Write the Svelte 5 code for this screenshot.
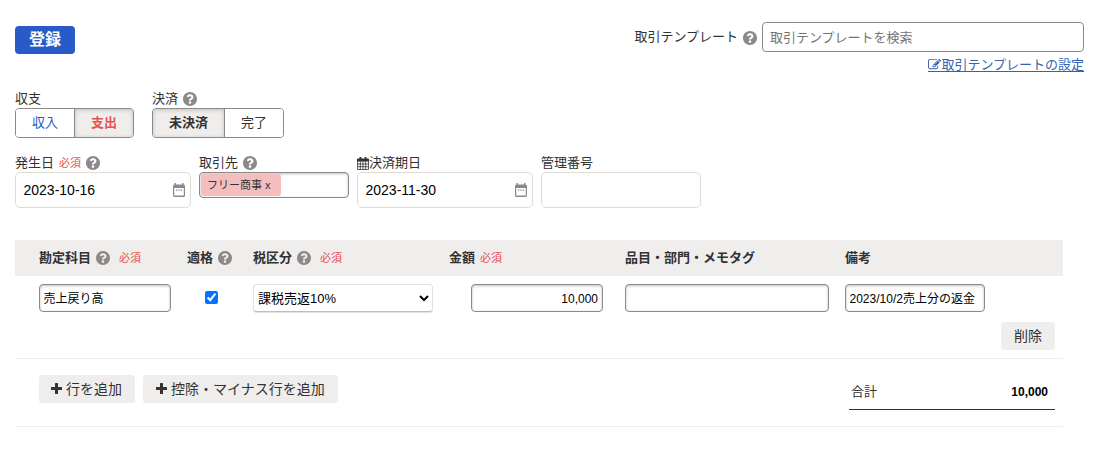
<script>
  let template = $state('');
  let dealDate = $state('2023-10-16');
  let dueDate = $state('2023-11-30');
  let number = $state('');
  let account = $state('売上戻り高');
  let qualified = $state(true);
  let amount = $state('10,000');
  let tags = $state('');
  let note = $state('2023/10/2売上分の返金');
</script>

{#snippet help()}
  <svg class="help" viewBox="8 8 496 496" aria-hidden="true">
    <path d="M504 256c0 136.997-111.043 248-248 248S8 392.997 8 256C8 119.083 119.043 8 256 8s248 111.083 248 248zM262.655 90c-54.497 0-89.255 22.957-116.549 63.758-3.536 5.286-2.353 12.415 2.715 16.258l34.699 26.31c5.205 3.947 12.621 3.008 16.665-2.122 17.864-22.658 30.113-35.797 57.303-35.797 20.429 0 45.698 13.148 45.698 32.958 0 14.976-12.363 22.667-32.534 33.976C247.128 238.528 216 254.941 216 296v4c0 6.627 5.373 12 12 12h56c6.627 0 12-5.373 12-12v-1.333c0-28.462 83.186-29.647 83.186-106.667 0-58.002-60.165-102-116.531-102zM256 338c-25.365 0-46 20.635-46 46 0 25.364 20.635 46 46 46s46-20.636 46-46c0-25.364-20.635-46-46-46z" />
  </svg>
{/snippet}

{#snippet plus()}
  <svg class="plus" viewBox="0 0 11 11" aria-hidden="true"><path d="M4 .5Q4 0 4.500 0h2Q7 0 7 .5V4h3.500Q11 4 11 4.500v2Q11 7 10.500 7H7v3.500Q7 11 6.500 11h-2Q4 11 4 10.500V7H.5Q0 7 0 6.500v-2Q0 4 .5 4H4z" /></svg>
{/snippet}

{#snippet picker()}
  <svg class="picker" viewBox="0 0 12 14" aria-hidden="true">
    <path fill-rule="evenodd" d="M1.500 0h1.500v1.500h6V0h1.500v1.500Q12 1.500 12 3v9.500Q12 14 10.500 14h-9Q0 14 0 12.500V3Q0 1.500 1.500 1.500zM1.200 5v7.600h9.600V5z" />
    <path d="M3 6.500h1.300v1.300H3zM5.400 6.500h1.300v1.300H5.400zM7.800 6.500h1.300v1.300H7.800z" />
  </svg>
{/snippet}

<main>
  <header>
    <button class="submit">登録</button>
    <div class="template">
      <div class="search">
        <span>取引テンプレート</span>{@render help()}
        <input bind:value={template} placeholder="取引テンプレートを検索" />
      </div>
      <a href="#settings"><svg viewBox="0 0 1792 1792" aria-hidden="true"><path d="M888 1184l116-116-152-152-116 116v56h96v96h56zm440-720q-16-16-33 1l-350 350q-17 17-1 33t33-1l350-350q17-17 1-33zm80 594v190q0 119-84.500 203.500t-203.500 84.500h-832q-119 0-203.500-84.500t-84.500-203.500v-832q0-119 84.500-203.500t203.500-84.500h832q63 0 117 25 15 7 18 23 3 17-9 29l-49 49q-14 14-32 8-23-6-45-6h-832q-66 0-113 47t-47 113v832q0 66 47 113t113 47h832q66 0 113-47t47-113v-126q0-13 9-22l64-64q15-15 35-7t20 29zm-96-738l288 288-672 672h-288v-288zm444 132l-92 92-288-288 92-92q28-28 68-28t68 28l152 152q28 28 28 68t-28 68z" /></svg>取引テンプレートの設定</a>
    </div>
  </header>

  <section class="toggles">
    <div class="field">
      <div class="label">収支</div>
      <div class="segment income">
        <button class="blue">収入</button><button class="on red">支出</button>
      </div>
    </div>
    <div class="field">
      <div class="label">決済{@render help()}</div>
      <div class="segment settle">
        <button class="on">未決済</button><button>完了</button>
      </div>
    </div>
  </section>

  <section class="details">
    <div class="field date">
      <div class="label">発生日<span class="required">必須</span>{@render help()}</div>
      <div class="soft"><input bind:value={dealDate} />{@render picker()}</div>
    </div>
    <div class="field partner">
      <div class="label">取引先{@render help()}</div>
      <div class="box tagbox"><span class="tag">フリー商事 <span>x</span></span></div>
    </div>
    <div class="field date">
      <div class="label due"><svg class="cal" viewBox="0 0 12 13" aria-hidden="true"><path class="bar" d="M0 2Q0 1.500 1 1.500h10q1 0 1 .5v2.500H0zM2.500 0h1.800v3H2.500zM7.700 0h1.800v3H7.700z" /><path d="M.5 4v8.500h11V4M.5 7h11M.5 9.700h11M3.300 4v8.500M6 4v8.500M8.700 4v8.500" /></svg>決済期日</div>
      <div class="soft"><input bind:value={dueDate} />{@render picker()}</div>
    </div>
    <div class="field number">
      <div class="label">管理番号</div>
      <div class="soft"><input bind:value={number} /></div>
    </div>
  </section>

  <section class="lines">
    <div class="grid head">
      <div>勘定科目{@render help()}<span class="required wide">必須</span></div>
      <div>適格{@render help()}</div>
      <div>税区分{@render help()}<span class="required wide">必須</span></div>
      <div>金額<span class="required">必須</span></div>
      <div>品目・部門・メモタグ</div>
      <div>備考</div>
    </div>
    <div class="grid row">
      <input class="box account" bind:value={account} />
      <div class="check"><input type="checkbox" bind:checked={qualified} /></div>
      <select><option>課税売返10%</option></select>
      <input class="box amount" bind:value={amount} />
      <input class="box tags" bind:value={tags} />
      <input class="box note" bind:value={note} />
    </div>
    <div class="remove"><button class="gray">削除</button></div>
    <div class="foot">
      <div class="adders">
        <button class="gray">{@render plus()}行を追加</button>
        <button class="gray long">{@render plus()}控除・マイナス行を追加</button>
      </div>
      <div class="total"><span>合計</span><strong>10,000</strong></div>
    </div>
  </section>
</main>

<style>
  :global(body) { background: #fff; }
  main, main * { box-sizing: border-box; }
  main {
    height: 449px;
    overflow: hidden;
    padding: 22px 12px 0 15px;
    color: #323232;
    font: 13px/20px "Liberation Sans", "Noto Sans CJK JP", sans-serif;
  }
  button, input, select { font-family: inherit; margin: 0; }
  button { padding: 0; border: 0; color: inherit; }
  input { min-width: 0; color: #000; outline: 0; }
  .help { width: 14px; height: 14px; fill: #8c8989; flex: none; }

  header { display: flex; justify-content: space-between; height: 68px; }
  .submit {
    width: 60px; height: 28px; margin-top: 4px;
    border-radius: 4px; background: #285ac8; color: #fff;
    font-size: 16px; font-weight: 700; line-height: 26px;
  }
  .search { display: flex; align-items: center; justify-content: flex-end; }
  .search .help { margin: 1px 5px 0 5px; }
  .search input {
    width: 322px; height: 30px; padding: 0 7px;
    border: 1px solid #8c8989; border-radius: 4px; font-size: 13px;
  }
  .search input::placeholder { color: #757575; opacity: 1; }
  a {
    display: block; margin-top: 3px;
    text-align: right; color: #3264af; text-decoration: none;
  }
  a { width: 156px; margin-left: auto; height: 17px; line-height: 19px; white-space: nowrap; border-bottom: 1px solid #3264af; }
  a svg { width: 13px; height: 13px; vertical-align: -2px; fill: currentColor; }

  .toggles { display: flex; gap: 18px; height: 62px; }
  .label { display: flex; align-items: center; height: 18px; line-height: 18px; }
  .label .help { margin-left: 5px; }
  .required { margin-left: 5px; color: #e65055; font-size: 11px; font-weight: 400; }
  .required.wide { margin-left: 9px; }
  .segment {
    display: flex; height: 30px; overflow: hidden;
    border: 1px solid #8c8989; border-radius: 4px;
  }
  .segment button { flex: 1; background: #fff; font-size: 13px; line-height: 26px; }
  .segment button + button { border-left: 1px solid #8c8989; }
  .segment .on { background: #f0eeed; font-weight: 700; box-shadow: inset 0 1px 4px rgba(0, 0, 0, .2); }
  .segment .blue { color: #285ac8; }
  .segment .red { color: #e65055; }
  .income { width: 119px; }
  .settle { width: 132px; }
  .settle button:first-child { flex: 0 0 71px; }

  .details { display: flex; gap: 8px; height: 88px; padding-top: 2px; }
  .date { width: 176px; }
  .partner { width: 150px; }
  .number { width: 160px; }
  .soft {
    display: flex; align-items: center; height: 36px; padding: 0 5px 0 7.500px;
    border: 1px solid #e1dcd2; border-radius: 5px;
  }
  .soft input { flex: 1; padding: 0; border: 0; background: none; font-size: 14px; }
  .picker { width: 12px; height: 14px; fill: #8c8989; }
  .cal { width: 12px; height: 13px; fill: none; stroke: #323232; stroke-width: .8; }
  .cal .bar { fill: #323232; stroke: none; }
  .box {
    height: 28px; border: 1px solid #8c8989; border-radius: 4px; background: #fff;
    box-shadow: inset 0 1px 3px rgba(0, 0, 0, .25);
  }
  .tagbox { height: 26px; padding: 1px; display: flex; }
  .tag {
    width: 80px; height: 22px; padding-left: 6px; white-space: nowrap;
    border-radius: 3px; background: #f5bebe; font-size: 11px; line-height: 22px;
  }

  .lines { width: 1048px; }
  .grid { display: grid; grid-template-columns: 148px 66px 196px 176px 220px 1fr; padding-left: 24px; }
  .head { height: 36px; background: #f0eeed; font-weight: 700; }
  .head div { display: flex; align-items: center; }
  .head .help { margin-left: 5px; }
  .row { padding-top: 8px; height: 46px; align-items: start; }
  .row .box { padding: 0 4px 1px 3.500px; font-size: 12px; }
  .row .amount { padding: 1px 4px 0; }
  .account { width: 132px; }
  .check { height: 26px; display: flex; align-items: center; padding-left: 18px; }
  .check input { width: 13px; height: 13px; margin: 0; }
  select {
    width: 180px; height: 28px; padding: 0; color: #000; font-size: 13px;
    border: 1px solid #e1e1e1; border-bottom-color: #bebebe; border-radius: 4px; background: #fff;
    box-shadow: 0 1px 1px rgba(0, 0, 0, .12);
  }
  .amount { width: 132px; margin-left: 22px; text-align: right; }
  .tags { width: 204px; }
  .note { width: 140px; }
  .gray {
    height: 28px; padding: 0 12px; border-radius: 3px; background: #f0eeed;
    font-size: 14px; line-height: 28px; white-space: nowrap;
  }
  .remove { display: flex; justify-content: flex-end; height: 37px; padding-right: 8px; border-bottom: 1px solid #f0eeed; }
  .remove .gray { width: 54px; padding: 0; }
  .foot {
    display: flex; justify-content: space-between; height: 68px;
    padding: 16px 8px 0 24px; border-bottom: 1px solid #f0eeed;
  }
  .adders { display: flex; gap: 8px; align-items: start; }
  .adders .gray { width: 96px; padding: 0 0 0 12px; text-align: left; }
  .adders .long { width: 195px; padding-left: 13px; }
  .plus { width: 11px; height: 11px; margin-right: 4px; fill: #323232; }
  .total {
    display: flex; justify-content: space-between; align-items: center;
    width: 206px; height: 35px; padding: 0 7px 0 2px; border-bottom: 1px solid #323232;
  }
  .total strong { color: #000; font-size: 12px; }
</style>
